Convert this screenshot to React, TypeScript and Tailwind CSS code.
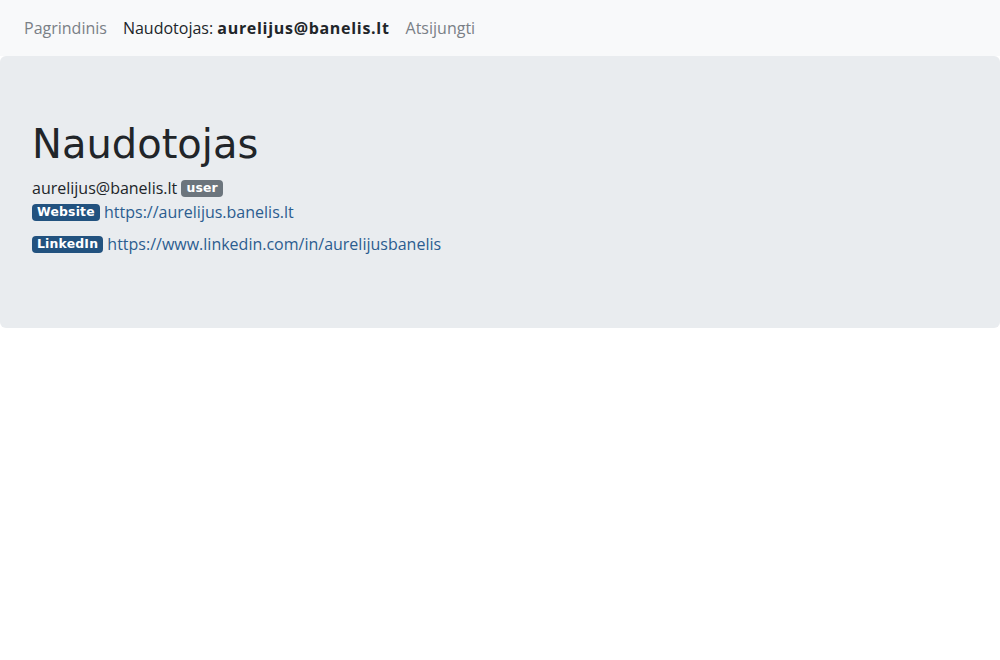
import React from 'react';

const badge =
  'inline-block align-[2px] rounded bg-[#22527f] text-white text-[12.4px] leading-none font-bold px-[5px] pt-[2px] pb-[3px] tracking-[0.2px]';

export default function App() {
  const body = { fontFamily: '"Open Sans", "Noto Sans", sans-serif' };
  const dejavu = { fontFamily: '"DejaVu Sans", sans-serif' };
  return (
    <div className="min-h-screen bg-white text-[#212529]" style={body}>
      {/* navigacija */}
      <nav className="flex items-center h-14 px-4 bg-[#f8f9fa] text-base">
        <a className="px-2 text-[#7a8086]">Pagrindinis</a>
        <span className="px-2 text-[#212529]">
          Naudotojas: <b className="font-bold tracking-[0.7px]">aurelijus@banelis.lt</b>
        </span>
        <a className="px-2 text-[#7a8086]">Atsijungti</a>
      </nav>

      {/* jumbotron */}
      <div className="bg-[#e9ecef] rounded-md px-8 pt-16 pb-16">
        <h1 className="text-[40px] leading-[48px] mb-2 font-normal" style={dejavu}>
          Naudotojas
        </h1>
        <div className="leading-6">
          aurelijus@banelis.lt{' '}
          <span className={badge.replace('bg-[#22527f]', 'bg-[#6c757d]')} style={dejavu}>
            user
          </span>
        </div>
        <div className="leading-6">
          <span className={badge} style={dejavu}>
            Website
          </span>{' '}
          <a className="text-[#2c5d8f]">https://aurelijus.banelis.lt</a>
        </div>
        <div className="leading-6 mt-2 mb-2">
          <span className={badge} style={dejavu}>
            LinkedIn
          </span>{' '}
          <a className="text-[#2c5d8f]">https://www.linkedin.com/in/aurelijusbanelis</a>
        </div>
      </div>
    </div>
  );
}
